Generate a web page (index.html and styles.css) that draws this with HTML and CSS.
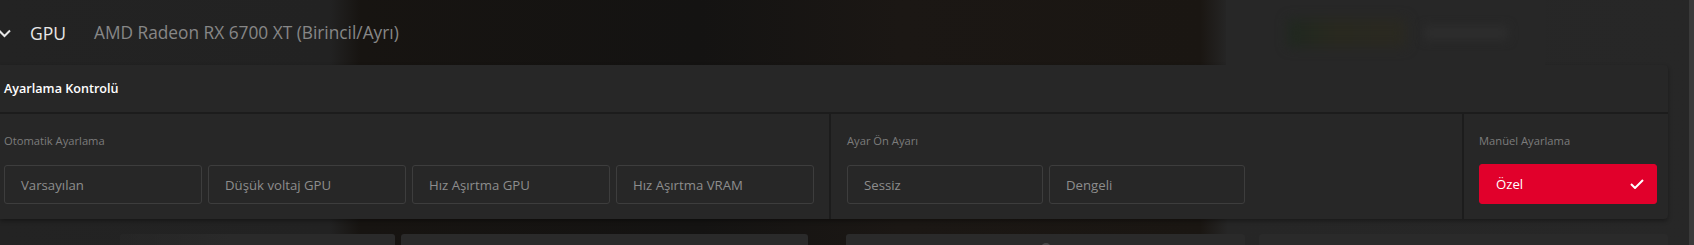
FILE: index.html
```html
<!DOCTYPE html>
<html>
<head>
    <title>GPU Ayarlama</title>
    <meta charset="UTF-8">
    <link rel="stylesheet" href="styles.css">
</head>
<body>
    <div class="page">
        <div class="content">
            <div class="gpu_row">
                <svg class="chevron" width="12" height="9" viewBox="0 0 12 9">
                    <polyline points="0,1.5 5.5,7 11,1.5" fill="none" stroke="#e6e6e6" stroke-width="2"/>
                </svg>
                <span class="gpu_label">GPU</span>
                <span class="gpu_name">AMD Radeon RX 6700 XT (Birincil/Ayrı)</span>
                <div class="ghost_card">
                    <span class="ghost_logo"></span>
                    <span class="ghost_bar"></span>
                </div>
            </div>

            <div class="tuning">
                <div class="tuning_head">Ayarlama Kontrolü</div>
                <div class="tuning_body">
                    <div class="group group_auto">
                        <div class="group_label">Otomatik Ayarlama</div>
                        <div class="btn_row">
                            <div class="opt">Varsayılan</div>
                            <div class="opt">Düşük voltaj GPU</div>
                            <div class="opt">Hız Aşırtma GPU</div>
                            <div class="opt">Hız Aşırtma VRAM</div>
                        </div>
                    </div>
                    <div class="group group_preset">
                        <div class="group_label">Ayar Ön Ayarı</div>
                        <div class="btn_row">
                            <div class="opt">Sessiz</div>
                            <div class="opt">Dengeli</div>
                        </div>
                    </div>
                    <div class="group group_manual">
                        <div class="group_label">Manüel Ayarlama</div>
                        <div class="btn_row">
                            <div class="opt opt_active">
                                <span>Özel</span>
                                <svg width="14" height="10" viewBox="0 0 14 10">
                                    <polyline points="1,5 5,9 13,1" fill="none" stroke="#fff" stroke-width="2"/>
                                </svg>
                            </div>
                        </div>
                    </div>
                </div>
            </div>

            <div class="next_row">
                <div class="ghost_box box1"></div>
                <div class="ghost_box box2"></div>
                <div class="ghost_box box3"><span class="knob"></span></div>
                <div class="ghost_box box4"></div>
            </div>
        </div>
        <div class="scrollbar"></div>
    </div>
</body>
</html>
```

FILE: styles.css
```css
body{
    margin: 0;
    height: 245px;
    overflow: hidden;
    font-family: "Open Sans", "Liberation Sans", sans-serif;
    background: linear-gradient(to right, #232323 0, #222222 330px, #171411 360px, #141312 700px, #1b1714 900px, #1a1612 1200px, #262626 1228px, #272727 100%);
}
.page{
    display: flex;
    height: 245px;
}
.content{
    flex: 1;
}
.scrollbar{
    width: 5px;
    background: #3a3a3a;
}

/* GPU header row */
.gpu_row{
    height: 65px;
    display: flex;
    align-items: center;
}
.chevron{
    margin-left: -1px;
    margin-top: 1px;
}
.gpu_label{
    margin-left: 19px;
    font-size: 17.5px;
    color: #e8e8e8;
}
.gpu_name{
    margin-left: 28px;
    font-size: 17.3px;
    color: #878787;
}
.ghost_card{
    margin-left: auto;
    margin-right: 144px;
    width: 257px;
    height: 65px;
    padding-left: 62px;
    display: flex;
    align-items: center;
    gap: 18px;
    background: #272727;
}
.ghost_logo{
    width: 118px;
    height: 28px;
    background: linear-gradient(to right, #1f281f, #29291f 40%, #2a2921);
    filter: blur(6px);
}
.ghost_bar{
    width: 84px;
    height: 14px;
    background: #2d2d2d;
    filter: blur(5px);
}

/* tuning panel */
.tuning{
    width: 1668px;
    background: #272727;
    border-radius: 0 4px 4px 0;
    box-shadow: 0 2px 4px rgba(0,0,0,0.35);
}
.tuning_head{
    height: 47px;
    padding-left: 4px;
    display: flex;
    align-items: center;
    font-size: 12.6px;
    font-weight: 600;
    color: #ffffff;
    border-bottom: 2px solid #1c1c1c;
}
.tuning_body{
    display: flex;
    height: 105px;
}
.group{
    padding-top: 19px;
}
.group_auto{
    width: 825px;
    padding-left: 4px;
    border-right: 2px solid #1c1c1c;
}
.group_preset{
    width: 615px;
    padding-left: 16px;
    border-right: 2px solid #1c1c1c;
}
.group_manual{
    padding-left: 15px;
}
.group_label{
    height: 16px;
    line-height: 16px;
    font-size: 11.2px;
    color: #7c7c7c;
}
.btn_row{
    display: flex;
    gap: 6px;
    margin-top: 16px;
}
.opt{
    box-sizing: border-box;
    width: 198px;
    height: 39px;
    padding-left: 16px;
    display: flex;
    align-items: center;
    border: 1px solid #3d3d3d;
    border-radius: 3px;
    font-size: 13.2px;
    color: #8d8d8d;
}
.group_preset .opt{
    width: 196px;
}
.opt_active{
    width: 178px;
    height: 40px;
    margin-top: -1px;
    justify-content: space-between;
    padding-right: 12px;
    background: #e1002b;
    border-color: #e1002b;
    color: #ffffff;
}

/* next row, mostly behind the blur */
.next_row{
    display: flex;
    margin-top: 15px;
}
.ghost_box{
    height: 20px;
    background: #2a2a2a;
    border-radius: 3px 3px 0 0;
}
.box1{
    margin-left: 120px;
    width: 275px;
    background: linear-gradient(to right, rgba(42,42,42,0.4), #2a2a2a 40%);
}
.box2{
    margin-left: 6px;
    width: 407px;
}
.box3{
    margin-left: 38px;
    width: 399px;
    display: flex;
    justify-content: center;
}
.box4{
    margin-left: 14px;
    width: 409px;
}
.knob{
    width: 10px;
    height: 10px;
    margin-top: 9px;
    border-radius: 50%;
    background: #4a4a4a;
}
```
